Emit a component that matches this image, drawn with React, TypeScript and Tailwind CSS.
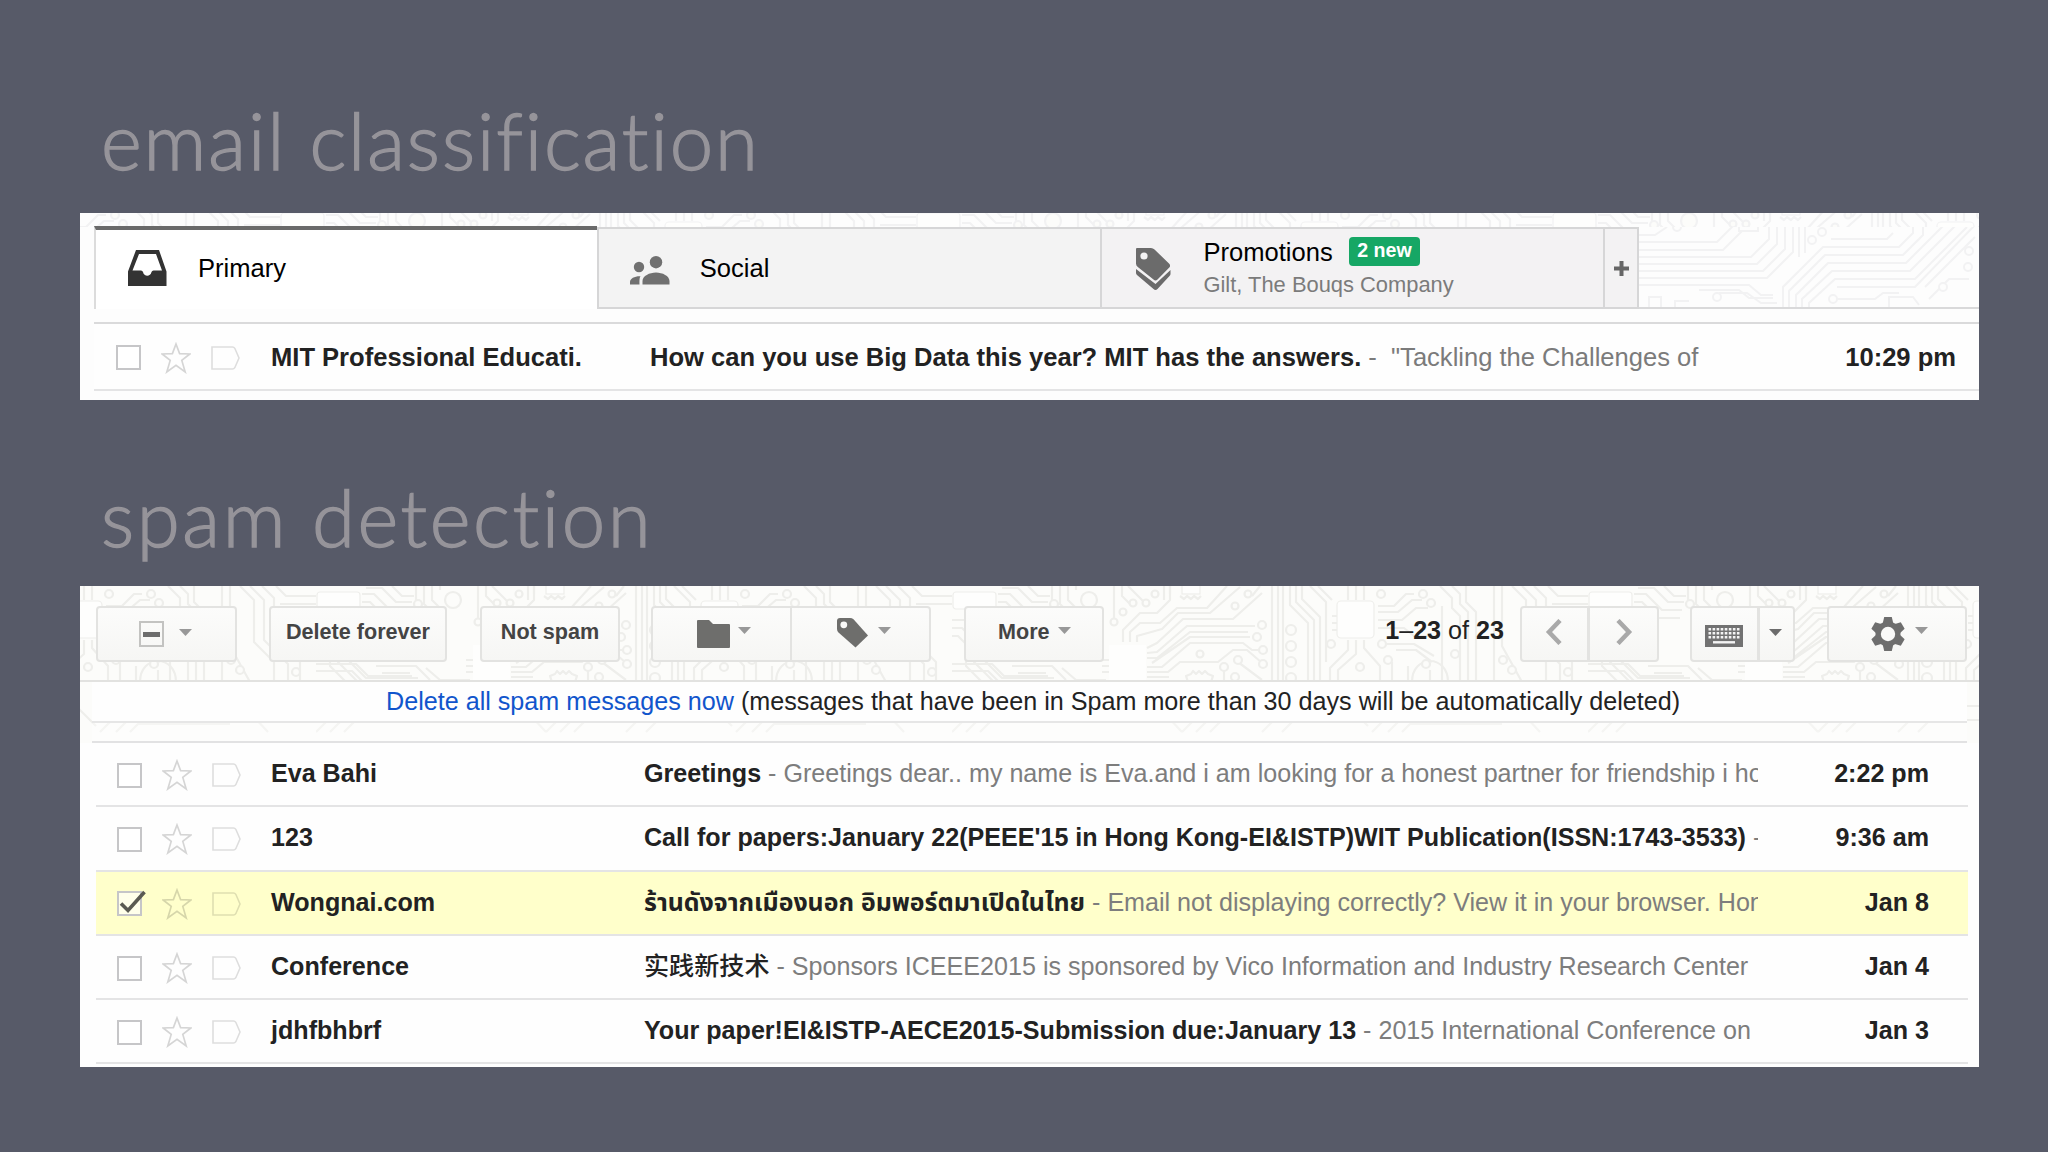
import type { ReactNode } from 'react';

const sans = "font-['Liberation_Sans','Noto_Sans_CJK_SC','Noto_Sans_Thai',sans-serif]";

type Mail = {
  from: string;
  subject: string;
  snippet: string;
  time: string;
  checked?: boolean;
  light?: boolean;
};

const spam: Mail[] = [
  { from: 'Eva Bahi', subject: 'Greetings', snippet: 'Greetings dear.. my name is Eva.and i am looking for a honest partner for friendship i ho', time: '2:22 pm' },
  { from: '123', subject: "Call for papers:January 22(PEEE'15 in Hong Kong-EI&ISTP)WIT Publication(ISSN:1743-3533)", snippet: '', time: '9:36 am' },
  { from: 'Wongnai.com', subject: 'ร้านดังจากเมืองนอก อิมพอร์ตมาเปิดในไทย', snippet: 'Email not displaying correctly? View it in your browser. Hon', time: 'Jan 8', checked: true },
  { from: 'Conference', subject: '实践新技术', snippet: 'Sponsors ICEEE2015 is sponsored by Vico Information and Industry Research Center', time: 'Jan 4', light: true },
  { from: 'jdhfbhbrf', subject: 'Your paper!EI&ISTP-AECE2015-Submission due:January 13', snippet: '2015 International Conference on', time: 'Jan 3' },
];

/* Circuit board texture, one tile is 636px wide */
function Circuit({ id, x, y, className }: { id: string; x: number; y: number; className: string }) {
  return (
    <svg className={`absolute inset-0 w-full h-full ${className}`} aria-hidden="true">
      <defs>
        <pattern id={id} x={x} y={y} width="636" height="160" patternUnits="userSpaceOnUse">
          <g fill="none" stroke="currentColor" strokeWidth="2.2" strokeLinejoin="round">
            <path d="M0 27H-6M0 34h14l16 16v22l20 20h52M0 42h10l12 12v22l22 22h60M0 50h6l8 8v22l24 24M0 78h40l12 12h44M0 85h36l10 10M60 80h40l14 14M66 87h28M110 82l14 12h30" />
            <path d="M46 8h12l16 16h20M46 16h8l16 16h22M50 2h16l14 14h16M76 0l10 10h12M100 0v14M108 0v18l8 8v24M116 0v14l8 8v30M124 0v4" />
            <path d="M162 0v36M170 0v10l8 8M176 0l17 17M171 56V44l17-17h17l13-13V0M178 56V46l10-9h20l17-15h30l20-22M185 56v-6l25-7 16-16h32l30-26M195 62l10-5 26-24h50l29-26M195 67l10-1 30-26h68M195 72h10l33-26h58M200 77l38-26h60" />
            <path d="M195 81h15l28-24h53l9 7h10M195 86h21l12-10h38l15-12h14l14 12M195 91h22M150 74h7M150 80h7M150 86h7M272 84v10M286 76l24 18M212 0v14M218 0v8" />
            <path d="M228 10l4 3 3-3 4 3 3-3 4 3 3-3M236 96l-2-6 5-2 2-3 3 3 3-3 3 3 3-3 3 3 5 2-2 6M300 10l8-10" />
            <path d="M320 0v96M326 0v96M331 0v96M338 0v19l18 18v59M344 0v16l18 18v62M350 0v13l18 18v65M358 0l16 16v60M366 0l14 14" />
            <path d="M396 0v14M404 0v14M412 0v14M426 26h20l14-12h10M426 34h24l14-12h12M426 42h26l10 8h24M426 20h16l12-12h8" />
            <path d="M396 54v10l-18 18v14M404 54v14l-18 16v12M412 54v8l16 18v16M434 58h28l20 12M444 64h20l16 12M440 76v20M460 96c0-28 36-28 36 0M456 80v14M478 94v-10M380 30h5M380 37h5M380 44h5" />
            <path d="M488 0l12 12v10l8 8v66M500 0l8 8v10l8 8v70M514 0v16l10 10v70M542 0v96M550 0v60l20 36M560 0l14 14v42l20 20v20M570 0l14 14v40l24 24v16M582 0l12 12v38l26 26v18M596 0l10 10h30M600 18h36M490 20v76" />
            <path d="M0 146L40 106M14 146L54 106M28 146L60 114h140l30 32M70 120h124M80 126h116M230 146l36-36M244 146l36-36M258 146l36-36M310 146l26-26h60l20 20M330 146l12-12h50M420 146l30-30h110l28 30M436 146l20-20h100M450 146l8-8h92" />
            <g className="fill-[#fcfcfa]">
              <circle cx="137" cy="14" r="8" />
              <circle cx="102" cy="18" r="4" />
              <circle cx="162" cy="36" r="3.5" />
              <circle cx="171" cy="26" r="3.5" />
              <circle cx="181" cy="17" r="3.5" />
              <circle cx="194" cy="17" r="3.5" />
              <circle cx="203" cy="8" r="3.5" />
              <circle cx="296" cy="8" r="3.5" />
              <circle cx="283" cy="20" r="3.5" />
              <circle cx="310" cy="39" r="4" />
              <circle cx="305" cy="51" r="4" />
              <circle cx="311" cy="64" r="4" />
              <circle cx="311" cy="78" r="4" />
              <circle cx="248" cy="68" r="3.5" />
              <circle cx="272" cy="81" r="4" />
              <circle cx="286" cy="74" r="4" />
              <circle cx="283" cy="91" r="4" />
              <circle cx="339" cy="44" r="5" />
              <circle cx="339" cy="60" r="5" />
              <circle cx="339" cy="76" r="5" />
              <circle cx="339" cy="92" r="5" />
              <circle cx="429" cy="8" r="4" />
              <circle cx="471" cy="8" r="4" />
              <circle cx="479" cy="17" r="4" />
              <circle cx="379" cy="58" r="4" />
              <circle cx="430" cy="58" r="4" />
              <circle cx="503" cy="68" r="4" />
              <circle cx="436" cy="74" r="4" />
              <circle cx="408" cy="81" r="4" />
              <circle cx="474" cy="78" r="4" />
              <circle cx="551" cy="74" r="4" />
              <circle cx="560" cy="84" r="4" />
              <circle cx="616" cy="86" r="4" />
            </g>
          </g>
          <g className="fill-[#fefefd]" stroke="currentColor" strokeWidth="1.2">
            <rect x="1" y="6" width="43" height="17" rx="3" />
            <rect x="385" y="15" width="37" height="37" rx="4" />
            <path d="M157 59h37v37h-37z" stroke="none" />
            <rect x="230" y="-2" width="18" height="10" />
          </g>
        </pattern>
      </defs>
      <rect width="100%" height="100%" fill={`url(#${id})`} />
    </svg>
  );
}

/* Wider traces seen to the right of the tabs */
function CircuitCorner() {
  return (
    <svg className="block text-[#f2f2f3]" width="340" height="80" viewBox="0 0 340 80" fill="none" stroke="currentColor" strokeWidth="2">
      <path d="M0 8h16l12-8M0 15h78l22-22M0 23h84l20-20h10M0 30h112l18-18V-4M0 37h118l20-20V-4M0 44h124l22-22V-4M0 51h128l26-26V-4M0 58h110l12 10h12M60 63h40l10 8h24" />
      <path d="M144 80V60l40-40h76l14-14V-4M150 80V64l36-36h78l20-20V-4M157 80V68l32-32h78l40-40M163 80V72l30-28h78l48-48M170 80l0-4 26-24h80l52-52M198 60h78L336-2M286 60l50-50M290 72l20-20h20M160 30V0M166 26V0M192 12h56l6-6M190-4h40" />
      <path d="M10 80v-10h12v10M36 80v-6h14M80 66h28l14 10h16M196 72h40l8-6h16M250 80v-10h24l6 8" />
      <g className="fill-[#fdfdfd]">
        <circle cx="38" cy="0" r="4" />
        <circle cx="173" cy="13" r="4" />
        <circle cx="183" cy="5" r="4" />
        <circle cx="330" cy="24" r="4" />
        <circle cx="329" cy="40" r="4" />
        <circle cx="78" cy="70" r="4" />
        <circle cx="194" cy="72" r="4" />
        <circle cx="304" cy="60" r="4" />
      </g>
      <rect x="100" y="-12" width="19" height="16" fill="#fdfdfd" />
    </svg>
  );
}

function Check({ checked }: { checked?: boolean }) {
  return (
    <div className="relative w-[25px] h-[25px] border-2 border-[#c6c6c8] bg-white/60 shrink-0">
      {checked && (
        <svg className="absolute -left-0.5 -top-1 overflow-visible" width="28" height="26" viewBox="0 0 28 26" fill="none">
          <path d="M4 14.5l7 7L27.5 3" stroke="#5a5a52" strokeWidth="3.6" />
        </svg>
      )}
    </div>
  );
}

function RowMarks({ checked }: { checked?: boolean }) {
  return (
    <div className="flex items-center shrink-0 mt-[2px]">
      <Check checked={checked} />
      <svg className="ml-5 shrink-0" width="30" height="32" viewBox="0 0 30 32" fill="none" stroke="#000" strokeOpacity="0.16" strokeWidth="1.7">
        <path d="M15 2l3.6 9.6 10.2.4-8 6.4 3.4 11.6-9.2-6.6L5.8 30l3.4-11.6-8-6.4 10.2-.4z" />
      </svg>
      <svg className="ml-5 shrink-0" width="29" height="24" viewBox="0 0 29 24" fill="none" stroke="#000" strokeOpacity="0.13" strokeWidth="1.6">
        <path d="M1 1h20.5q1.500 0 2.300 1.300L28 12l-4.200 9.700q-.8 1.300-2.300 1.300H1z" />
      </svg>
    </div>
  );
}

function MailRow({ mail }: { mail: Mail }) {
  return (
    <div className={`relative h-[64.3px] flex items-center pl-[21px] pr-[39px] border-b-2 border-[#e4e4e5] text-[25.1px] ${mail.checked ? 'bg-[#ffffcb]' : 'bg-[#fefefe]'}`}>
      <RowMarks checked={mail.checked} />
      <div className="ml-[30px] w-[373px] shrink-0 font-bold text-[#222] pb-0.5">{mail.from}</div>
      <div className="w-[1114px] shrink-0 overflow-hidden whitespace-nowrap text-[#222] leading-[44px] pb-0.5">
        <span className={mail.light ? 'font-medium' : mail.checked ? 'font-bold text-[24.9px]' : 'font-bold'}>{mail.subject}</span>
        <span className="text-[#7d7d7d]"> - {mail.snippet}</span>
      </div>
      <div className="ml-auto font-bold text-[#222] pb-0.5">{mail.time}</div>
    </div>
  );
}

function Caret({ className = '', dark }: { className?: string; dark?: boolean }) {
  return (
    <svg className={`shrink-0 ${className}`} width="13" height="7" viewBox="0 0 13 7">
      <path d="M0 0h13L6.500 7z" fill={dark ? '#6c6c6c' : '#989898'} />
    </svg>
  );
}

function Btn({ className, children }: { className: string; children: ReactNode }) {
  return (
    <div className={`h-[56px] shrink-0 flex items-center border-2 border-[#e3e3e1] bg-linear-to-b from-[#fcfcfb] to-[#f6f6f4] text-[21.6px] font-bold text-[#444] whitespace-nowrap ${className}`}>
      {children}
    </div>
  );
}

function Chevron({ flip }: { flip?: boolean }) {
  return (
    <svg className={flip ? 'rotate-180' : ''} width="17" height="26" viewBox="0 0 17 26" fill="none">
      <path d="M15 1.500L4 13l11 11.500" stroke="#a9a9a9" strokeWidth="4.500" />
    </svg>
  );
}

function Keyboard() {
  return (
    <svg width="38" height="22" viewBox="0 0 38 22">
      <rect width="38" height="22" fill="#727272" />
      {[3.5, 7.5, 11.5].map((y) => (
        <path key={y} d={`M3.500 ${y + 0.7}h31`} stroke="#f4f4f4" strokeWidth="2.6" strokeDasharray="2.600 1.460" />
      ))}
      <path d="M8 17.300h22" stroke="#f4f4f4" strokeWidth="2.400" />
    </svg>
  );
}

function Gear() {
  return (
    <svg width="34" height="34" viewBox="0 0 34 34">
      <g fill="#6e6e6e">
        {[0, 60, 120].map((a) => (
          <path key={a} d="M13.200 0h7.600l1.400 6v22l-1.400 6h-7.600l-1.400-6V6z" transform={`rotate(${a} 17 17)`} />
        ))}
        <circle cx="17" cy="17" r="12.500" />
      </g>
      <circle cx="17" cy="17" r="7.200" fill="#f9f9f8" />
    </svg>
  );
}

export default function App() {
  return (
    <div className={`w-[2048px] h-[1152px] overflow-hidden bg-[#575a68] leading-8 ${sans}`}>
      <h1 className="h-[213px] pl-[101px] pt-[94px] font-['Lato'] font-light text-[78px] leading-[92px] text-[#96949a] [-webkit-text-stroke:1.400px_#96949a]">
        <span className="tracking-[1.9px]">email classification</span>
      </h1>

      {/* Inbox with category tabs */}
      <section className="relative ml-[80px] w-[1899px] h-[187px] bg-[#fdfdfd] overflow-hidden text-[25.55px]">
        <div className="relative h-[14px]">
          <Circuit id="traces-top" x={200} y={-6} className="text-[#f2f2f3]" />
        </div>
        <div className="relative ml-[14px] h-[82px] flex">
          <div className="relative w-[503px] -mt-px h-[83px] border-t-4 border-t-[#6a6a6a] border-l-2 border-l-[#dcdcdc] bg-white flex items-center pl-[32px] pb-[3px]">
            <svg width="39" height="36" viewBox="0 0 39 36">
              <path fillRule="evenodd" fill="#333" d="M8 0h23l7.500 21.500V36H0V21.500zM11 4L4.500 20.500H13q1.500 0 2 1.500c1 5 7.500 5 8.500 0q.5-1.500 2-1.500H34L28 4z" />
            </svg>
            <span className="ml-[31px] text-black">Primary</span>
          </div>
          <div className="w-[504px] border-y-2 border-l-2 border-[#d6d6d7] bg-[#f3f3f3] flex items-center pl-[31px]">
            <svg className="mt-1" width="40" height="29" viewBox="0 0 40 29" fill="#707070">
              <circle cx="26" cy="6.200" r="6.200" />
              <circle cx="9" cy="11" r="5.200" />
              <path d="M12.500 28.500V25c0-5 7-8.500 13.500-8.500S39.500 20 39.500 25v3.500zM0 28.500V26c0-3.500 5-6 10.500-5.700-.8 1.200-1.200 3-1 8.200z" />
            </svg>
            <span className="ml-[30px] text-black">Social</span>
          </div>
          <div className="w-[503px] border-y-2 border-l-2 border-[#d6d6d7] bg-[#f3f2f3] flex pl-[34px]">
            <svg className="mt-[19px]" width="36" height="43" viewBox="0 0 36 43">
              <path fill="#6b6b6b" d="M1 0h14q2 0 3.500 1.500L33 15.500q2 2 .3 4L21.500 31.500q-2 1.800-4 0L1.800 19Q0 17.500 0 15.500V1q0-1 1-1z" />
              <circle cx="8" cy="8" r="3.600" fill="#f3f2f3" />
              <path fill="#6b6b6b" d="M0 21l19.500 15L34.500 22v4q0 1-1 2L21.500 41q-2 2-4 0L1 27q-1-1-1-2z" />
            </svg>
            <div className="ml-[31px] pt-[5px]">
              <div className="flex items-center h-[35px]">
                <span className="text-black">Promotions</span>
                <span className="ml-[16px] h-[29px] px-[8.5px] rounded bg-[#16a765] text-white text-[19.6px] font-bold leading-[27px]">2 new</span>
              </div>
              <div className="text-[21.9px] text-[#7b7b7b]">Gilt, The Bouqs Company</div>
            </div>
          </div>
          <div className="w-[36px] border-2 border-[#d6d6d7] bg-[#f3f2f3] flex items-center justify-center">
            <svg width="15" height="15" viewBox="0 0 15 15" stroke="#666" strokeWidth="4">
              <path d="M7.500 0v15M0 7.500h15" />
            </svg>
          </div>
          <div className="grow border-b-2 border-[#d9d9da] overflow-hidden">
            <CircuitCorner />
          </div>
        </div>
        <div className="relative ml-[14px] h-[15px] border-b-2 border-[#dadadb] bg-[#fdfdfd]" />
        <div className="relative ml-[14px] h-[67px] border-b-2 border-[#e4e4e5] flex items-center pl-[22px] pr-[23px] bg-[#fefefe]">
          <RowMarks />
          <div className="ml-[31px] w-[379px] shrink-0 font-bold text-[#222]">MIT Professional Educati.</div>
          <div className="whitespace-nowrap">
            <span className="font-bold text-[#222]">How can you use Big Data this year? MIT has the answers.</span>
            <span className="text-[#7b7b7b]"> - &nbsp;"Tackling the Challenges of</span>
          </div>
          <div className="ml-auto font-bold text-[#222]">10:29 pm</div>
        </div>
      </section>

      <h1 className="h-[186px] pl-[101px] pt-[71px] font-['Lato'] font-light text-[78px] leading-[92px] text-[#96949a] [-webkit-text-stroke:1.400px_#96949a]">
        <span className="tracking-[2.6px]">spam detection</span>
      </h1>

      {/* Spam folder */}
      <section className="relative ml-[80px] w-[1899px] h-[481px] bg-[#fcfcfa] overflow-hidden text-[25.15px]">
        <Circuit id="traces-spam" x={236} y={0} className="text-[#eeeeeb]" />
        <div className="relative h-[96px] border-b-2 border-[#e2e2e0] pl-[16px] pt-[20px] flex">
          <Btn className="w-[141px] rounded">
            <div className="ml-[41px] w-[25px] h-[26px] border-2 border-[#c3c3c1] flex items-center justify-center">
              <div className="w-[17px] h-[5px] bg-[#6d6d6d]" />
            </div>
            <Caret className="ml-[15px] mb-1" />
          </Btn>
          <Btn className="ml-[32px] w-[178px] rounded justify-center pb-1">Delete forever</Btn>
          <Btn className="ml-[33px] w-[140px] rounded justify-center pb-1">Not spam</Btn>
          <Btn className="ml-[31px] w-[141px] rounded-l pl-[44px]">
            <svg width="33" height="28" viewBox="0 0 33 28">
              <path d="M1 0h11l4 4h16q1 0 1 1v22q0 1-1 1H1q-1 0-1-1V1q0-1 1-1z" fill="#6e6e6c" />
            </svg>
            <Caret className="ml-[8px] mb-2" />
          </Btn>
          <Btn className="-ml-[2px] w-[141px] rounded-r pl-[45px]">
            <svg className="-mt-0.5" width="31" height="30" viewBox="0 0 31 30">
              <path d="M3 0h10q2 0 3.500 1.300L31 17.500 18.500 29.500 1.500 14.500Q0 13 0 11V3q0-3 3-3z" fill="#6e6e6c" />
              <circle cx="6.800" cy="6.800" r="3.400" fill="#f9f9f8" />
            </svg>
            <Caret className="ml-[10px] mb-2" />
          </Btn>
          <Btn className="ml-[33px] w-[140px] rounded pl-[32px]">
            <span className="pb-1">More</span>
            <Caret className="ml-[8px] mb-2" />
          </Btn>
          <div className="ml-auto mr-[16px] pt-[8px] text-[#222] whitespace-nowrap">
            <b>1</b>–<b>23</b> of <b>23</b>
          </div>
          <Btn className="w-[69px] rounded-l pl-[23px] pb-1"><Chevron /></Btn>
          <Btn className="-ml-[1px] w-[71px] rounded-r pl-[26px] pb-1"><Chevron flip /></Btn>
          <Btn className="ml-[31px] w-[69px] rounded-l pl-[13px] pt-1"><Keyboard /></Btn>
          <Btn className="-ml-[1px] w-[37px] rounded-r pl-[9px]"><Caret dark className="mb-1" /></Btn>
          <Btn className="ml-[32px] mr-[12px] w-[140px] rounded pl-[42px]">
            <Gear />
            <Caret className="ml-[10px] mb-2" />
          </Btn>
        </div>
        <div className="relative mx-[12px] h-[41px] border-b-2 border-[#e6e6e6] bg-[#fefefe] flex items-center pl-[294px] whitespace-nowrap text-[#222] pb-0.5">
          <span className="text-[#1155cc]">Delete all spam messages now</span>
          <span>&nbsp;(messages that have been in Spam more than 30 days will be automatically deleted)</span>
        </div>
        <div className="relative mx-[12px] h-[20px] border-b-2 border-[#e2e2e3] bg-white/40" />
        <div className="relative h-[324px] bg-[#fefefe] pl-[16px] pr-[11px]">
          {spam.map((m) => (
            <MailRow key={m.from} mail={m} />
          ))}
        </div>
      </section>
    </div>
  );
}
